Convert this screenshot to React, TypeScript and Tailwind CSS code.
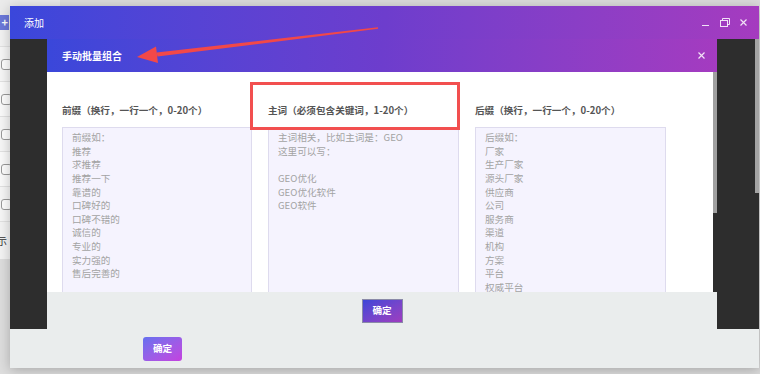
import React from "react";

const font = { fontFamily: '"Noto Sans CJK SC", "Noto Sans", sans-serif' };

const col1 = "前缀如：\n推荐\n求推荐\n推荐一下\n靠谱的\n口碑好的\n口碑不错的\n诚信的\n专业的\n实力强的\n售后完善的";
const col2 = "主词相关，比如主词是：GEO\n这里可以写：\n\nGEO优化\nGEO优化软件\nGEO软件";
const col3 = "后缀如：\n厂家\n生产厂家\n源头厂家\n供应商\n公司\n服务商\n渠道\n机构\n方案\n平台\n权威平台";

function Column({ label, text, w }: { label: string; text: string; w: string }) {
  return (
    <div className={`flex flex-col ${w}`}>
      <div className="h-[14px] leading-[14px] text-[9.6px] font-bold text-[#555] whitespace-nowrap">{label}</div>
      <div className="mt-[10px] h-[230px] border border-[#dedbee] bg-[#f5f3fe] pl-[9px] pt-[3px] text-[9.6px] leading-[13.64px] text-[#a3a3a3] whitespace-pre-line">
        {text}
      </div>
    </div>
  );
}

function XIcon({ size = 7 }: { size?: number }) {
  return (
    <svg width={size} height={size} viewBox="0 0 7 7">
      <path d="M0.5 0.5 L6.5 6.5 M6.5 0.5 L0.5 6.5" stroke="white" strokeWidth="1.2" strokeOpacity="0.85" />
    </svg>
  );
}

export default function App() {
  const rows = [0, 1, 2, 3, 4];
  return (
    <div className="relative w-[760px] h-[374px] overflow-hidden bg-[#dcdcdc]" style={font}>
      {/* background page */}
      <div className="flex flex-col w-[60px]">
        <div className="h-[15px] bg-[#ebebeb]" />
        <div className="h-[15px] bg-[#ebebeb] flex">
          <div className="w-[9px] h-[15px] bg-[#6c79da] flex items-center justify-end pr-[1px] text-white text-[11px] font-bold leading-none">+</div>
        </div>
        <div className="h-[17px] bg-[#f3f3f3] border-b border-[#e2e2e2]" />
        {rows.map((r) => (
          <div key={r} className={`h-[35px] flex items-center border-b border-[#e2e2e2] ${r % 2 === 0 ? "bg-[#f7f7f7]" : "bg-[#fbfbfb]"}`}>
            <div className="ml-[1px] w-[11px] h-[11px] rounded-[3px] border border-[#9a9a9a] bg-white" />
          </div>
        ))}
        <div className="h-[37px] bg-[#f4f4f4] flex items-center text-[10px] text-[#333]">
          <span className="ml-[-3px]">示</span>
        </div>
        <div className="h-[120px] bg-[#dedede]" />
      </div>

      {/* outer window */}
      <div className="absolute left-[10px] top-[6px] w-[749px] h-[362px] flex flex-col shadow-[0_2px_12px_rgba(0,0,0,0.25)]">
        <div className="h-[33px] flex items-center pl-[14px] pr-[12px] bg-gradient-to-r from-[#3a47db] via-[#6d3dcd] to-[#a53bbf]">
          <span className="text-[10px] text-white">添加</span>
          <div className="ml-auto flex items-center gap-[10px]">
            <svg width="9" height="9" viewBox="0 0 9 9">
              <path d="M1 7.5 H8" stroke="white" strokeOpacity="0.85" strokeWidth="1" />
            </svg>
            <svg width="10" height="9" viewBox="0 0 10 9">
              <rect x="0.5" y="2.5" width="7" height="6" fill="none" stroke="white" strokeOpacity="0.85" strokeWidth="1" />
              <path d="M2.5 2.5 V0.5 H9.5 V6.5 H7.5" fill="none" stroke="white" strokeOpacity="0.85" strokeWidth="1" />
            </svg>
            <XIcon />
          </div>
        </div>
        <div className="flex-1 flex flex-col">
          <div className="relative h-[290px] bg-[#2d2d2d]">
            <div className="absolute right-[0px] top-0 w-[4px] h-[154px] bg-[#a3a3a3]" />
            {/* inner dialog */}
            <div className="absolute left-[37px] top-0 w-[670px] h-[290px] flex flex-col">
              <div className="h-[33px] flex items-center pl-[15px] pr-[12px] bg-gradient-to-r from-[#3a47da] via-[#6d3dcd] to-[#a43bc0]">
                <span className="text-[10px] font-bold text-white">手动批量组合</span>
                <div className="ml-auto">
                  <XIcon />
                </div>
              </div>
              <div className="relative h-[220px] bg-white overflow-hidden">
                <div className="flex gap-[16px] pl-[15px] pt-[31px]">
                  <Column label="前缀（换行，一行一个，0-20个）" text={col1} w="w-[190px]" />
                  <Column label="主词（必须包含关键词，1-20个）" text={col2} w="w-[191px]" />
                  <Column label="后缀（换行，一行一个，0-20个）" text={col3} w="w-[191px]" />
                </div>
                <div className="absolute right-0 top-0 w-[4px] h-full bg-[#2d2d2d]">
                  <div className="w-[4px] h-[141px] bg-[#a0a0a0]" />
                </div>
              </div>
              <div className="flex-1 bg-[#eaeded] flex items-center justify-center">
                <button className="w-[41px] h-[24px] border border-[#8a8aa8] bg-gradient-to-br from-[#3c46d8] to-[#9e3bbf] text-white text-[9.6px] font-bold">
                  确定
                </button>
              </div>
            </div>
          </div>
          <div className="flex-1 bg-[#eaeded] flex items-center pl-[133px]">
            <button className="w-[39px] h-[24px] rounded-[3px] bg-gradient-to-br from-[#6370ef] to-[#c43fdf] text-white text-[9.6px] font-bold">
              确定
            </button>
          </div>
        </div>
      </div>

      {/* annotations */}
      <div className="absolute left-[250px] top-[82px] w-[210px] h-[48px] border-[3px] border-[#f24f4f]" />
      <svg className="absolute left-0 top-0" width="760" height="374" viewBox="0 0 760 374">
        <polygon points="378,27.3 378,28.7 157.5,56.6 156.5,52.6" fill="#f24848" />
        <polygon points="137,57 156,46.5 158,63" fill="#f24848" />
      </svg>
    </div>
  );
}
